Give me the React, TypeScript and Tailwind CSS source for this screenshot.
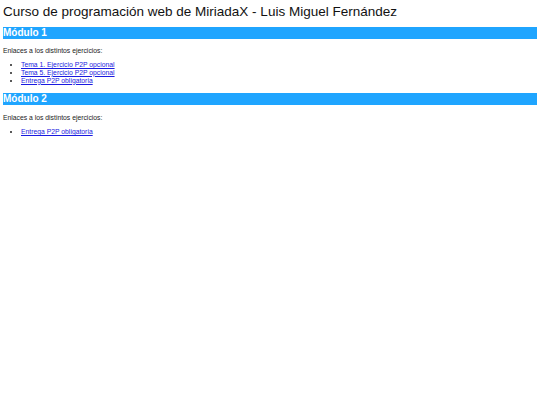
export default function App() {
  const font = { fontFamily: '"Liberation Sans", Arial, sans-serif' };
  return (
    <div className="w-[540px] h-[405px] bg-white px-[3px] text-black" style={font}>
      <h1 className="text-[13.5px] leading-[16px] pt-[4px] font-normal text-[#111]">
        Curso de programación web de MiriadaX - Luis Miguel Fernández
      </h1>
      <h2 className="mt-[7px] bg-[#1fa5ff] text-white font-bold text-[10px] leading-[12px] h-[12px]">
        Módulo 1
      </h2>
      <p className="text-[6.8px] leading-[8px] mt-[8px] text-[#222]">Enlaces a los distintos ejercicios:</p>
      <ul className="list-disc pl-[18px] mt-[6px] text-[6.8px] leading-[7.8px] text-[#222]">
        <li><a href="#" className="text-[#1a1ae0] underline">Tema 1. Ejercicio P2P opcional</a></li>
        <li><a href="#" className="text-[#1a1ae0] underline">Tema 5. Ejercicio P2P opcional</a></li>
        <li><a href="#" className="text-[#1a1ae0] underline">Entrega P2P obligatoria</a></li>
      </ul>
      <h2 className="mt-[9px] bg-[#1fa5ff] text-white font-bold text-[10px] leading-[12px] h-[12px]">
        Módulo 2
      </h2>
      <p className="text-[6.8px] leading-[8px] mt-[9px] text-[#222]">Enlaces a los distintos ejercicios:</p>
      <ul className="list-disc pl-[18px] mt-[6px] text-[6.8px] leading-[7.8px] text-[#222]">
        <li><a href="#" className="text-[#1a1ae0] underline">Entrega P2P obligatoria</a></li>
      </ul>
    </div>
  );
}
